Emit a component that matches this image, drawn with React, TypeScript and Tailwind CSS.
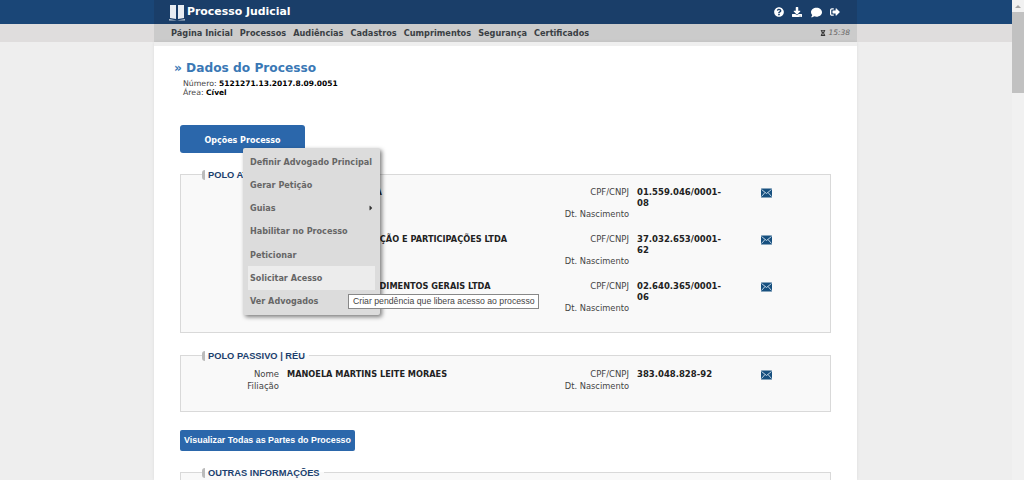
import { FaQuestionCircle, FaDownload, FaComment, FaSignOutAlt, FaHourglassHalf, FaCaretRight } from 'react-icons/fa';

const verdana = 'font-["DejaVu_Sans",sans-serif]';

const menuItems = [
  'Definir Advogado Principal',
  'Gerar Petição',
  'Guias',
  'Habilitar no Processo',
  'Peticionar',
  'Solicitar Acesso',
  'Ver Advogados',
];

const navItems = ['Página Inicial', 'Processos', 'Audiências', 'Cadastros', 'Cumprimentos', 'Segurança', 'Certificados'];

function MailIcon() {
  return (
    <svg width="11" height="10" viewBox="0 0 11 10" className="mt-[1px]">
      <rect width="11" height="9" y="0.5" rx="0.5" fill="#17507f" />
      <path d="M0.5 1.5l5 4 5-4M0.5 8.5l3.5-4M10.5 8.5l-3.5-4" stroke="#cfe0ee" strokeWidth="0.9" fill="none" />
    </svg>
  );
}

function Party({ name, doc, docBreak }: { name: string; doc: string; docBreak?: string }) {
  return (
    <div className={`grid grid-cols-[98px_256px_78px_116px_auto] gap-x-2 text-[8.5px] leading-[11px] ${verdana}`}>
      <div className="text-right text-[#444]">Nome</div>
      <div className="font-bold text-[8.2px] text-[#222] whitespace-nowrap">{name}</div>
      <div className="text-right text-[#444]">CPF/CNPJ</div>
      <div className="font-bold text-[#222] leading-[10.5px]">
        {doc}
        {docBreak && (
          <>
            <br />
            {docBreak}
          </>
        )}
      </div>
      <MailIcon />
      <div className="text-right text-[#444] mt-[1px]">Filiação</div>
      <div />
      <div className="text-right text-[8.3px] text-[#444] mt-[1px] -ml-6 whitespace-nowrap">Dt. Nascimento</div>
    </div>
  );
}

function Box({ title, className, children }: { title: string; className: string; children?: React.ReactNode }) {
  return (
    <fieldset className={`border border-[#d9d9d9] bg-[#f9f9f9] ${className}`}>
      <legend className="ml-[21px] flex items-center text-[9.3px] leading-[12px] font-['Liberation_Sans',sans-serif] font-bold text-[#1b3f6e]">
        <span className="w-[3px] h-[10px] rounded-l-sm bg-[#bbb] mr-[2px]" />
        <span className="pl-[1px] pr-1 pt-[1px]">{title}</span>
      </legend>
      {children}
    </fieldset>
  );
}

export default function App() {
  return (
    <div className="relative h-[480px] overflow-hidden bg-[#eeeeee] flex">
      <div className="flex-1 min-w-0 flex flex-col">
        {/* Header */}
        <div className="h-[24px] bg-[#1a4677] flex justify-center shrink-0">
          <div className="w-[703px] ml-[-1px] bg-[#1a3e69] flex items-center pl-[15px] pr-[17px]">
            <svg width="16" height="17" viewBox="0 0 16 17" className="mr-[3px]">
              <path d="M1 1h6v14l-6 -1z" fill="#e8edf2" />
              <path d="M9 1h6v13l-6 1z" fill="#e8edf2" />
              <path d="M0 15l8 1.5 8-1.5v1.5H0z" fill="#b9c6d4" />
            </svg>
            <span className={`text-white font-bold text-[10.9px] pt-[1px] -ml-[1px] ${verdana}`}>Processo Judicial</span>
            <div className="ml-auto flex items-center gap-[8.5px] text-white">
              <FaQuestionCircle className="w-[10px] h-[10px]" />
              <FaDownload className="w-[10px] h-[10px]" />
              <FaComment className="w-[11px] h-[11px]" />
              <FaSignOutAlt className="w-[10px] h-[10px]" />
            </div>
          </div>
        </div>

        {/* Nav */}
        <div className="h-[18px] bg-[#dfdddd] flex justify-center shrink-0">
          <div className="w-[703px] ml-[-1px] bg-[#cbcbcb] flex items-center pl-[17px] pr-[7px]">
            <div className={`flex gap-[7px] pt-[1px] text-[8.2px] font-bold text-[#3a3f44] ${verdana}`}>
              {navItems.map((n) => (
                <span key={n}>{n}</span>
              ))}
            </div>
            <div className="ml-auto flex items-center gap-[2px] text-[#666]">
              <FaHourglassHalf className="w-[6px] h-[6px] text-[#333]" />
              <span className={`italic text-[7.5px] ${verdana}`}>15:38</span>
            </div>
          </div>
        </div>

        {/* Content */}
        <div className="flex justify-center flex-1 min-h-0">
          <div className="relative w-[703px] ml-[-1px] bg-white border-t-[4px] border-[#efefef] pl-[26px] pr-[26px] pt-[14px] shadow-[0_0_3px_rgba(0,0,0,0.08)]">
            <h1 className={`text-[#3a78b5] font-bold text-[12.2px] leading-[17px] -ml-[6px] ${verdana}`}>» Dados do Processo</h1>
            <div className={`text-[7.8px] leading-[9px] text-[#444] mt-[2px] ml-[3px] ${verdana}`}>
              <div>Número: <b className="text-black text-[7.5px]">5121271.13.2017.8.09.0051</b></div>
              <div>Área: <b className="text-black text-[7.5px]">Cível</b></div>
            </div>

            <button className={`mt-[28px] block w-[125px] h-[28px] pt-[3px] rounded-[3px] bg-[#2b67ab] text-white font-bold text-[8px] ${verdana}`}>
              Opções Processo
            </button>

            <Box title="POLO ATIVO | AUTOR" className="mt-[15px] h-[165px] pt-[6px]">
              <div className="flex flex-col gap-[14px]">
                <Party name="CONSTRUTORA LTDA" doc="01.559.046/0001-" docBreak="08" />
                <Party name="NOVAS ADMINISTRAÇÃO E PARTICIPAÇÕES LTDA" doc="37.032.653/0001-" docBreak="62" />
                <Party name="CENTRAIS EMPREENDIMENTOS GERAIS LTDA" doc="02.640.365/0001-" docBreak="06" />
              </div>
            </Box>

            <Box title="POLO PASSIVO | RÉU" className="mt-[16px] h-[63px] pt-[7px]">
              <Party name="MANOELA MARTINS LEITE MORAES" doc="383.048.828-92" />
            </Box>

            <button className="mt-[18px] block h-[21px] w-[175px] rounded-[2px] bg-[#2b67ab] text-white font-bold text-[8.9px] whitespace-nowrap font-['Liberation_Sans',sans-serif]">
              Visualizar Todas as Partes do Processo
            </button>

            <Box title="OUTRAS INFORMAÇÕES" className="mt-[15px] h-[60px]" />

            {/* Dropdown menu */}
            <div className="absolute left-[89px] top-[102px] w-[137px] h-[167px] bg-[#dcdcdc] rounded-[2px] shadow-[2px_2px_4px_rgba(0,0,0,0.5)] px-[5px] pt-[2px]">
              {menuItems.map((item) => (
                <div
                  key={item}
                  className={`relative h-[23.3px] flex items-center pl-[2px] text-[8.1px] font-bold text-[#666] whitespace-nowrap ${verdana} ${item === 'Solicitar Acesso' ? 'bg-[#ececec]' : ''}`}
                >
                  {item}
                  {item === 'Guias' && <FaCaretRight className="absolute right-0 w-[8px] h-[8px] text-[#333]" />}
                </div>
              ))}
            </div>

            {/* Tooltip */}
            <div className="absolute left-[194px] top-[248px] h-[15px] w-[191px] border border-[#888] bg-white flex items-center pl-1 text-[8.7px] text-[#444] font-['Liberation_Sans',sans-serif] whitespace-nowrap">
              Criar pendência que libera acesso ao processo
            </div>
          </div>
        </div>
      </div>

      {/* Scrollbar */}
      <div className="w-[12px] bg-[#f1f1f1] shrink-0 flex flex-col">
        <div className="h-[12px] flex items-center justify-center">
          <span className="w-0 h-0 border-x-[3px] border-x-transparent border-b-[3px] border-b-[#a3a3a3]" />
        </div>
        <div className="h-[81px] bg-[#c1c1c1]" />
      </div>
    </div>
  );
}
